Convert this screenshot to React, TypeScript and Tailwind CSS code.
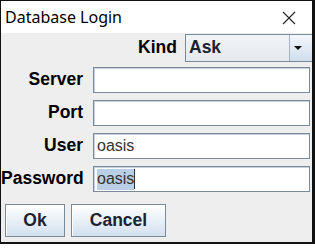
import React from 'react'

function Field({ label, children }: { label: string; children?: React.ReactNode }) {
  return (
    <div className="flex items-center h-[26px]">
      <div className="w-[82px] shrink-0 text-right font-bold text-[17.5px] text-black leading-none whitespace-nowrap">{label}</div>
      <div className="ml-[10px] w-[217px] shrink-0 h-[26px] bg-white border border-[#7a8a99] shadow-[inset_1px_1px_0_#c8d2dc] flex items-center pl-[3px] text-[16px] text-[#333] leading-none">
        {children}
      </div>
    </div>
  )
}

export default function App() {
  return (
    <div className="w-[315px] h-[251px] bg-white overflow-hidden font-['Liberation_Sans',Arial,sans-serif]">
      <div className="w-[315px] h-[244px] border-l border-t border-r-[3px] border-b-2 border-[#111] bg-[#eeeeee] flex flex-col overflow-hidden">
        {/* title bar */}
        <div className="h-[32px] bg-white flex items-center justify-between pl-[4px] pr-[16px] shrink-0">
          <span className="text-[16px] text-black font-['Noto_Sans',sans-serif]">Database Login</span>
          <svg width="14" height="14" viewBox="0 0 14 14" className="mt-[1px]">
            <path d="M1 1 L13 13 M13 1 L1 13" stroke="#222" strokeWidth="1.1" fill="none" />
          </svg>
        </div>

        <div className="flex flex-col pt-[1px]">
          {/* kind row */}
          <div className="flex items-center h-[28px]">
            <div className="w-[176px] shrink-0 text-right font-bold text-[17.5px] text-black leading-none">Kind</div>
            <div className="ml-[8px] w-[140px] h-[28px] shrink-0 border border-[#7a8a99] bg-gradient-to-b from-[#f2f4f7] to-[#e4e9ee] flex">
              <div className="w-[104px] shrink-0 flex items-center pl-[3px] font-bold text-[17.5px] text-[#1c2230] leading-none border-r border-[#a3b3c2]">
                Ask
              </div>
              <div className="w-[24px] shrink-0 bg-gradient-to-b from-[#f3f7fb] to-[#cfdeed] flex items-center pl-[4px]">
                <svg width="8" height="4" viewBox="0 0 8 4">
                  <path d="M0 0 L8 0 L4 4 Z" fill="#111" />
                </svg>
              </div>
            </div>
          </div>

          <div className="flex flex-col gap-[7px] mt-[5px]">
            <Field label="Server" />
            <Field label="Port" />
            <Field label="User">oasis</Field>
            <Field label="Password">
              <span className="bg-[#b8cfe5] h-[21px] flex items-center">oasis</span>
              <span className="w-px h-[20px] bg-[#333]" />
            </Field>
          </div>

          <div className="flex gap-[6px] mt-[12px] pl-[4px]">
            <button className="w-[60px] h-[33px] border border-[#7a8a99] bg-gradient-to-b from-[#ffffff] to-[#d3e0ee] font-bold text-[17.5px] text-[#1c2230] shadow-[inset_1px_1px_0_#fff]">
              Ok
            </button>
            <button className="w-[95px] h-[33px] border border-[#7a8a99] bg-gradient-to-b from-[#ffffff] to-[#d3e0ee] font-bold text-[17.5px] text-[#1c2230] shadow-[inset_1px_1px_0_#fff]">
              Cancel
            </button>
          </div>
        </div>
      </div>
    </div>
  )
}
